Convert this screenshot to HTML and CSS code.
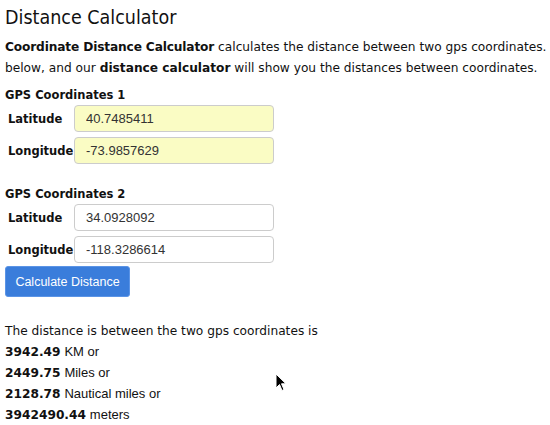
FILE: index.html
```html
<!DOCTYPE html>
<html>
<head>
<meta charset="utf-8">
<link rel="stylesheet" href="styles.css">
</head>
<body>
<div class="page">
  <h1 class="title">Distance Calculator</h1>
  <p class="intro"><b class="intro-strong">Coordinate Distance Calculator</b> calculates the distance between two gps coordinates.<br>below, and our <b>distance calculator</b> will show you the distances between coordinates.</p>

  <div class="group">
    <div class="group-title">GPS Coordinates 1</div>
    <div class="row">
      <label class="label">Latitude</label>
      <input class="field field-filled" type="text" value="40.7485411">
    </div>
    <div class="row">
      <label class="label">Longitude</label>
      <input class="field field-filled" type="text" value="-73.9857629">
    </div>
  </div>

  <div class="group group-second">
    <div class="group-title">GPS Coordinates 2</div>
    <div class="row">
      <label class="label">Latitude</label>
      <input class="field" type="text" value="34.0928092">
    </div>
    <div class="row">
      <label class="label">Longitude</label>
      <input class="field" type="text" value="-118.3286614">
    </div>
  </div>

  <button class="calc-btn" type="button">Calculate Distance</button>

  <div class="result">
    <div class="result-line">The distance is between the two gps coordinates is</div>
    <div class="result-line"><b>3942.49</b> <span class="unit">KM or</span></div>
    <div class="result-line"><b>2449.75</b> <span class="unit">Miles or</span></div>
    <div class="result-line"><b>2128.78</b> <span class="unit">Nautical miles or</span></div>
    <div class="result-line"><b>3942490.44</b> <span class="unit">meters</span></div>
  </div>

  <svg class="cursor" width="12" height="19" viewBox="0 0 12 19"><path d="M1 1 L1 15 L4.5 11.5 L7 17.5 L9 16.5 L6.5 10.8 L11 10.8 Z" fill="#000" stroke="#fff" stroke-width="1"/></svg>
</div>
</body>
</html>
```

FILE: styles.css
```css
html, body {
  margin: 0;
  padding: 0;
  background: #fff;
  overflow: hidden;
}
body {
  font-family: "DejaVu Sans", Verdana, sans-serif;
  color: #111;
}
.page {
  position: relative;
  padding: 5px 5px 0 5px;
}
.title {
  margin: 0;
  font-family: "DejaVu Sans Condensed", "DejaVu Sans", sans-serif;
  font-size: 19.5px;
  font-weight: normal;
  line-height: 26px;
}
.intro {
  margin: 6px 0 0 0;
  font-size: 12.2px;
  line-height: 21px;
  white-space: nowrap;
}
.intro-strong {
  letter-spacing: -0.15px;
}
.group {
  margin-top: 9px;
}
.group-second {
  margin-top: 23px;
}
.group-title {
  font-size: 11.5px;
  font-weight: bold;
  line-height: 14px;
}
.row {
  display: flex;
  align-items: center;
  margin-top: 3px;
}
.row + .row {
  margin-top: 5px;
}
.label {
  width: 69px;
  padding-left: 3px;
  box-sizing: border-box;
  font-size: 11.5px;
  font-weight: bold;
}
.field {
  width: 200px;
  height: 27px;
  box-sizing: border-box;
  border: 1px solid #cccccc;
  border-radius: 4px;
  padding: 0 11px;
  font-family: "Liberation Sans", Arial, sans-serif;
  font-size: 13px;
  color: #333;
  background: #fff;
  outline: none;
}
.field-filled {
  background: #fafcc4;
}
.calc-btn {
  display: block;
  margin-top: 3px;
  width: 125px;
  height: 31px;
  background: #3a7ddb;
  border: 1px solid #5b94e6;
  border-radius: 3px;
  color: #fff;
  font-family: "Liberation Sans", Arial, sans-serif;
  font-size: 12.5px;
  padding: 0;
}
.result {
  margin-top: 24px;
  font-size: 12.2px;
  line-height: 21px;
}
.result-line {
  height: 21px;
}
.unit {
  font-family: "Liberation Sans", Arial, sans-serif;
  font-size: 13px;
  line-height: 1;
}
.cursor {
  position: absolute;
  left: 275px;
  top: 373px;
}
```
